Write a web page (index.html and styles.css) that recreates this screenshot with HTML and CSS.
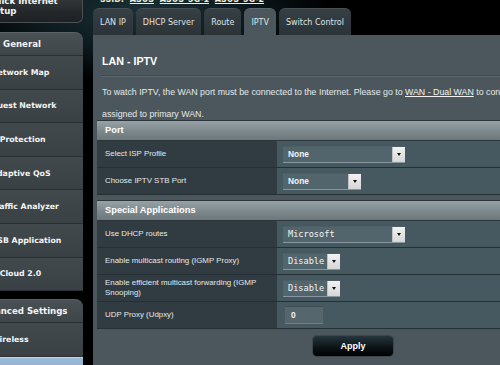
FILE: index.html
```html
<!DOCTYPE html>
<html>
<head>
<meta charset="utf-8">
<title>LAN - IPTV</title>
<link rel="stylesheet" href="styles.css">
</head>
<body>
<div class="page">
  <aside class="side">
    <div class="qis">Quick Internet<br>Setup</div>
    <div class="group">
      <div class="ghead">General</div>
      <div class="item">Network Map</div>
      <div class="item">Guest Network</div>
      <div class="item">AiProtection</div>
      <div class="item">Adaptive QoS</div>
      <div class="item">Traffic Analyzer</div>
      <div class="item">USB Application</div>
      <div class="item">AiCloud 2.0</div>
    </div>
    <div class="group">
      <div class="ghead">Advanced Settings</div>
      <div class="item">Wireless</div>
      <div class="item active">LAN</div>
    </div>
  </aside>

  <main class="main">
    <div class="ssid">SSID: <a>ASUS</a> <a>ASUS_5G-1</a> <a>ASUS_5G-2</a></div>
    <nav class="tabs">
      <div class="tab">LAN IP</div>
      <div class="tab">DHCP Server</div>
      <div class="tab">Route</div>
      <div class="tab on">IPTV</div>
      <div class="tab">Switch Control</div>
    </nav>
    <section class="panel">
      <h1 class="title">LAN - IPTV</h1>
      <div class="rule"></div>
      <p class="desc">To watch IPTV, the WAN port must be connected to the Internet. Please go to <a>WAN - Dual WAN</a> to confirm that WAN port is assigned to primary WAN.</p>

      <div class="tbl">
        <div class="thead">Port</div>
        <div class="row">
          <div class="lbl">Select ISP Profile</div>
          <div class="val"><div class="sel wide"><span class="txt">None</span><span class="arr"></span></div></div>
        </div>
        <div class="row">
          <div class="lbl">Choose IPTV STB Port</div>
          <div class="val"><div class="sel mid"><span class="txt">None</span><span class="arr"></span></div></div>
        </div>
      </div>

      <div class="tbl">
        <div class="thead">Special Applications</div>
        <div class="row">
          <div class="lbl">Use DHCP routes</div>
          <div class="val"><div class="sel wide mono"><span class="txt">Microsoft</span><span class="arr"></span></div></div>
        </div>
        <div class="row">
          <div class="lbl">Enable multicast routing (IGMP Proxy)</div>
          <div class="val"><div class="sel small mono"><span class="txt">Disable</span><span class="arr"></span></div></div>
        </div>
        <div class="row">
          <div class="lbl">Enable efficient multicast forwarding (IGMP Snooping)</div>
          <div class="val"><div class="sel small mono"><span class="txt">Disable</span><span class="arr"></span></div></div>
        </div>
        <div class="row">
          <div class="lbl">UDP Proxy (Udpxy)</div>
          <div class="val"><div class="inp">0</div></div>
        </div>
      </div>

      <div class="actions"><button class="apply">Apply</button></div>
    </section>
  </main>
</div>
</body>
</html>
```

FILE: styles.css
```css
* { box-sizing: border-box; margin: 0; padding: 0; }

html, body {
  width: 500px;
  height: 365px;
  overflow: hidden;
}

body {
  background:
    radial-gradient(ellipse 190px 70px at 140px 12px, #1b3035 0%, #0c1a1e 55%, rgba(0,0,0,0) 100%),
    #000;
  font-family: "Liberation Sans", Arial, sans-serif;
  color: #fff;
}

.page {
  display: flex;
  align-items: flex-start;
  margin-left: -39px;
}

/* ---------- sidebar ---------- */
.side {
  flex: none;
  width: 122px;
  margin-top: -12px;
  font-family: "DejaVu Sans", Verdana, sans-serif;
  font-weight: bold;
  color: #f4f4f4;
}

.qis {
  height: 35px;
  padding: 8px 0 0 26px;
  font-size: 8.6px;
  line-height: 10px;
  border-radius: 0 0 6px 6px;
  background: linear-gradient(#3f4447, #24282b 70%, #1d2124);
  border: 1px solid #4a5053;
  border-top: 0;
}

.group {
  margin-top: 9px;
  background: #3d4447;
  border-radius: 0 8px 0 0;
  overflow: hidden;
}

.ghead {
  height: 24px;
  line-height: 23px;
  text-align: center;
  font-size: 8.6px;
  background: linear-gradient(#4a5155, #3f4649);
  border-bottom: 1px solid #2b3033;
  border-radius: 0 8px 0 0;
  border-top: 1px solid #5b6266;
}

.item {
  height: 33.6px;
  display: flex;
  align-items: center;
  padding-left: 30px;
  font-size: 7.8px;
  white-space: nowrap;
  background: linear-gradient(#42494c, #3a4144);
  border-bottom: 1px solid #2a2f32;
}

.item.active {
  background: linear-gradient(#9bbad6, #7f9fbe);
  border-top: 1px solid #c3d6e8;
}

.side .group + .group {
  margin-top: 8px;
}

/* ---------- main ---------- */
.main {
  flex: none;
  width: 520px;
  margin-left: 10px;
}

.ssid {
  height: 8px;
  margin-top: -4px;
  padding-left: 7px;
  font-size: 8px;
  line-height: 8px;
  font-weight: bold;
  color: #e9e6cf;
  font-family: "DejaVu Sans", Verdana, sans-serif;
  white-space: nowrap;
  word-spacing: 3px;
}

.ssid a {
  text-decoration: underline;
  color: #f1eed8;
}

.tabs {
  display: flex;
  gap: 3px;
  margin-top: 4px;
}

.tab {
  height: 27px;
  line-height: 27px;
  padding: 0 7px;
  font-family: "DejaVu Sans", Verdana, sans-serif;
  font-size: 8px;
  color: #dfe3e5;
  background: linear-gradient(#353f44, #2b3337);
  border-radius: 6px 6px 0 0;
  border-top: 1px solid #475156;
}

.tab.on {
  background: #4b575c;
  border-top-color: #5c686d;
}

.panel {
  background: #4b575c;
  padding: 0 4px 20px 4px;
}

.title {
  padding-top: 20px;
  padding-left: 5px;
  font-size: 10.7px;
  line-height: 13px;
  font-weight: bold;
  color: #fff;
}

.rule {
  margin: 7px 0 0 4px;
  height: 2px;
  border-top: 1px solid #3e494e;
  border-bottom: 1px solid #5b676c;
}

.desc {
  margin-top: 5px;
  margin-bottom: -5px;
  padding-left: 5px;
  padding-right: 6px;
  font-size: 8.8px;
  line-height: 21.5px;
  color: #e6e9ea;
}

.desc a {
  color: #f2f2f2;
  text-decoration: underline;
}

.tbl {
  border-top: 1px solid #2c3539;
}

.tbl + .tbl {
  margin-top: 5px;
}

.thead {
  height: 20px;
  line-height: 19px;
  padding-left: 8px;
  font-size: 9.3px;
  font-weight: bold;
  color: #fff;
  background: linear-gradient(#97a2a6, #7b868b 60%, #6c777c);
  border-bottom: 1px solid #2c3539;
}

.row {
  display: grid;
  grid-template-columns: 180px 1fr;
  height: 27px;
  border-bottom: 1px solid #262f33;
}

.lbl {
  display: flex;
  align-items: center;
  padding: 0 10px 0 8px;
  font-size: 7.9px;
  line-height: 10px;
  color: #e4e8ea;
  background: #303c41;
}

.val {
  display: flex;
  align-items: center;
  padding-left: 6px;
  background: #465960;
}

.sel {
  height: 17px;
  display: flex;
  align-items: stretch;
  background: #53656c;
  border-bottom: 1px solid #8796a0;
  border-top: 1px solid #4d5e65;
}

.sel.wide { width: 122px; }
.sel.mid { width: 78px; }
.sel.small { width: 57px; }

.sel .txt {
  flex: 1;
  display: flex;
  align-items: center;
  padding-left: 5px;
  font-size: 8.4px;
  font-weight: bold;
  color: #f4f4f4;
}

.sel.mono .txt {
  font-family: "DejaVu Sans Mono", "Liberation Mono", monospace;
  font-weight: normal;
  font-size: 8.6px;
}

.sel .arr {
  flex: none;
  width: 13px;
  position: relative;
  background: linear-gradient(#f2f2f2, #d6d6d6);
  border-left: 1px solid #c0c0c0;
}

.sel .arr::after {
  content: "";
  position: absolute;
  left: 4px;
  top: 6px;
  border-left: 2.5px solid transparent;
  border-right: 2.5px solid transparent;
  border-top: 3px solid #111;
}

.inp {
  width: 38px;
  height: 18px;
  margin-left: 2px;
  padding-left: 6px;
  display: flex;
  align-items: center;
  font-size: 8.4px;
  font-weight: bold;
  color: #f4f4f4;
  background: #56666d;
  border-top: 1px solid #3f4a4f;
  border-bottom: 1px solid #6e7d84;
}

.actions {
  display: flex;
  justify-content: center;
  margin-top: 7px;
}

.apply {
  width: 80px;
  height: 20px;
  border: 0;
  border-radius: 4px;
  background: linear-gradient(#26363d, #0b1215 60%, #000);
  box-shadow: 0 0 0 1px #3a474c;
  font-family: "Liberation Sans", Arial, sans-serif;
  font-size: 9px;
  font-weight: bold;
  color: #fff;
}
```
